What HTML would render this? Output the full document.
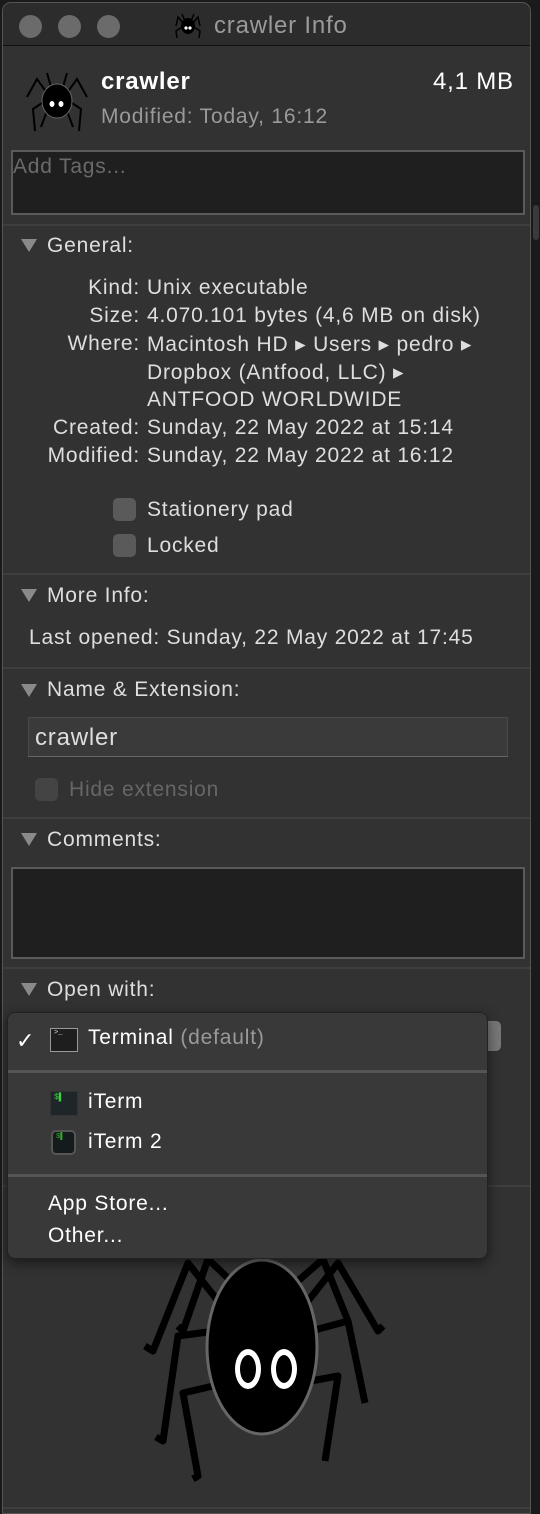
<!DOCTYPE html>
<html><head><meta charset="utf-8"><style>
*{margin:0;padding:0;box-sizing:border-box}
body{width:540px;height:1514px;background:#1a1a1a;font-family:"Liberation Sans",sans-serif;color:#dedede;position:relative;overflow:hidden}
.win{position:absolute;left:2px;top:2px;width:529px;height:1512px;background:#323232;border:1px solid #555;border-radius:9px 9px 0 0;overflow:hidden}
.a{position:absolute;white-space:nowrap;font-size:21px;letter-spacing:0.8px}
.hr{position:absolute;left:0;width:529px;height:2px;background:#3e3e3e}
.tri{position:absolute;width:0;height:0;border-left:8px solid transparent;border-right:8px solid transparent;border-top:13px solid #8a8a8a}
.cb{position:absolute;width:23px;height:23px;border-radius:5px;background:#5a5a5a}
.r{text-align:right;width:137px;left:0}
</style></head><body>
<div class="win">
 <div style="position:absolute;left:0;top:0;width:529px;height:43px;background:#2c2c2c;border-bottom:1px solid #111"></div>
 <div style="position:absolute;left:16px;top:12px;width:23px;height:23px;border-radius:50%;background:#6b6b6b"></div>
 <div style="position:absolute;left:55px;top:12px;width:23px;height:23px;border-radius:50%;background:#6b6b6b"></div>
 <div style="position:absolute;left:94px;top:12px;width:23px;height:23px;border-radius:50%;background:#6b6b6b"></div>
 <svg style="position:absolute;left:170px;top:8px" width="30" height="30" viewBox="0 0 30 30"><g stroke="#000" stroke-width="1.5" fill="none"><path d="M10 12L5 6 3 15M20 12L25 6 27 15M9 16L3 20 4 27M21 16L27 20 26 27M12 10L9 3M18 10L21 3"/></g><ellipse cx="15" cy="15" rx="7" ry="8" fill="#000"/><circle cx="13" cy="17" r="1.6" fill="#fff"/><circle cx="17" cy="17" r="1.6" fill="#fff"/></svg>
 <div class="a" style="left:211px;top:9px;font-size:24px;color:#9a9a9a">crawler Info</div>

 <svg style="position:absolute;left:22px;top:66px" width="64" height="64" viewBox="0 0 64 64"><g stroke="#000" stroke-width="2" fill="none"><path d="M22 24L12 10 2 28M42 24L52 10 62 28M20 32L8 40 10 62M44 32L56 40 54 62M26 18L22 4M38 18L42 4M22 42L16 58M42 42L48 58"/></g><ellipse cx="32" cy="32" rx="15" ry="17" fill="#000" stroke="#666"/><ellipse cx="27" cy="35" rx="3" ry="3.5" fill="#fff" stroke="#000"/><ellipse cx="36" cy="35" rx="3" ry="3.5" fill="#fff" stroke="#000"/></svg>
 <div class="a" style="left:98px;top:65px;font-size:24px;font-weight:bold;color:#fff">crawler</div>
 <div class="a" style="left:430px;top:65px;font-size:24px;color:#fff">4,1 MB</div>
 <div class="a" style="left:98px;top:102px;color:#9a9a9a">Modified: Today, 16:12</div>
 <div style="position:absolute;left:8px;top:147px;width:514px;height:65px;background:#1f1f1f;border:2px solid #5a5a5a"></div>
 <div class="a" style="left:10px;top:152px;color:#6a6a6a">Add Tags...</div>
 <div class="hr" style="top:221px"></div>

 <div class="tri" style="left:18px;top:236px"></div>
 <div class="a" style="left:44px;top:231px">General:</div>
 <div class="a r" style="top:273px">Kind:</div><div class="a" style="left:144px;top:273px">Unix executable</div>
 <div class="a r" style="top:301px">Size:</div><div class="a" style="left:144px;top:301px">4.070.101 bytes (4,6 MB on disk)</div>
 <div class="a r" style="top:329px">Where:</div><div class="a" style="left:144px;top:329px">Macintosh HD ▸ Users ▸ pedro ▸</div>
 <div class="a" style="left:144px;top:357px">Dropbox (Antfood, LLC) ▸</div>
 <div class="a" style="left:144px;top:385px">ANTFOOD WORLDWIDE</div>
 <div class="a r" style="top:413px">Created:</div><div class="a" style="left:144px;top:413px">Sunday, 22 May 2022 at 15:14</div>
 <div class="a r" style="top:441px">Modified:</div><div class="a" style="left:144px;top:441px">Sunday, 22 May 2022 at 16:12</div>
 <div class="cb" style="left:110px;top:495px"></div><div class="a" style="left:144px;top:495px">Stationery pad</div>
 <div class="cb" style="left:110px;top:531px"></div><div class="a" style="left:144px;top:531px">Locked</div>
 <div class="hr" style="top:570px"></div>

 <div class="tri" style="left:18px;top:586px"></div>
 <div class="a" style="left:44px;top:581px">More Info:</div>
 <div class="a" style="left:26px;top:623px">Last opened: Sunday, 22 May 2022 at 17:45</div>
 <div class="hr" style="top:664px"></div>

 <div class="tri" style="left:18px;top:681px"></div>
 <div class="a" style="left:44px;top:675px">Name &amp; Extension:</div>
 <div style="position:absolute;left:25px;top:714px;width:480px;height:40px;background:#3a3a3a;border:1px solid #4a4a4a;border-bottom:1px solid #666"></div>
 <div class="a" style="left:32px;top:721px;font-size:24px">crawler</div>
 <div class="cb" style="left:32px;top:775px;background:#444"></div><div class="a" style="left:66px;top:775px;color:#666">Hide extension</div>
 <div class="hr" style="top:814px"></div>

 <div class="tri" style="left:18px;top:830px"></div>
 <div class="a" style="left:44px;top:825px">Comments:</div>
 <div style="position:absolute;left:8px;top:864px;width:514px;height:92px;background:#1f1f1f;border:2px solid #5a5a5a"></div>
 <div class="hr" style="top:964px"></div>

 <div class="tri" style="left:18px;top:980px"></div>
 <div class="a" style="left:44px;top:975px">Open with:</div>
 <div style="position:absolute;left:470px;top:1018px;width:28px;height:30px;background:#777;border-radius:5px"></div>
 <div class="hr" style="top:1182px"></div>

 <svg style="position:absolute;left:134px;top:1250px" width="260" height="235" viewBox="134 1252 260 235"><g stroke="#000" stroke-width="7" fill="none" stroke-linejoin="round"><path d="M215 1300L185 1262 150 1350 142 1345M228 1280L205 1258 180 1330 175 1325M305 1300L335 1262 375 1330 380 1325M295 1280L320 1258 345 1320M212 1330L175 1335 160 1440 153 1436M210 1385L180 1392 195 1475 190 1478M308 1330L345 1320 362 1402M308 1380L335 1375 322 1460"/></g><ellipse cx="259" cy="1346" rx="55" ry="87" fill="#000" stroke="#666" stroke-width="3"/><ellipse cx="245" cy="1368" rx="13" ry="20" fill="#fff"/><ellipse cx="281" cy="1368" rx="13" ry="20" fill="#fff"/><ellipse cx="245" cy="1368" rx="8" ry="14" fill="#000"/><ellipse cx="281" cy="1368" rx="8" ry="14" fill="#000"/></svg>
 <div class="hr" style="top:1504px"></div>
</div>
<div style="position:absolute;left:533px;top:205px;width:6px;height:35px;background:#3a3a3a;border-radius:3px"></div>

<div style="position:absolute;left:7px;top:1012px;width:481px;height:247px;background:#393939;border:1px solid #222;border-radius:8px;box-shadow:0 4px 12px rgba(0,0,0,.5);overflow:hidden">
 <div class="a" style="left:8px;top:15px;color:#fff;font-size:22px">✓</div>
 <div style="position:absolute;left:42px;top:15px;width:28px;height:24px;background:#1e1e1e;border:1px solid #999"><span style="position:absolute;left:3px;top:0;font-size:7px;color:#ddd;font-family:'Liberation Mono'">&gt;_</span></div>
 <div class="a" style="left:80px;top:13px;color:#fff">Terminal <span style="color:#999">(default)</span></div>
 <div style="position:absolute;left:0;top:57px;width:481px;height:3px;background:#555"></div>
 <div style="position:absolute;left:42px;top:78px;width:28px;height:25px;background:#1f262a;border:1px solid #333"><span style="position:absolute;left:3px;top:1px;font-size:8px;color:#4c4;font-family:'Liberation Mono'">$▌</span></div>
 <div class="a" style="left:80px;top:77px;color:#fff">iTerm</div>
 <div style="position:absolute;left:43px;top:117px;width:25px;height:25px;background:#151a1c;border:2px solid #555;border-radius:5px"><span style="position:absolute;left:3px;top:1px;font-size:7px;color:#3a3;font-family:'Liberation Mono'">$▌</span></div>
 <div class="a" style="left:80px;top:117px;color:#fff">iTerm 2</div>
 <div style="position:absolute;left:0;top:161px;width:481px;height:3px;background:#555"></div>
 <div class="a" style="left:40px;top:179px;color:#fff">App Store...</div>
 <div class="a" style="left:40px;top:211px;color:#fff">Other...</div>
</div>
</body></html>
